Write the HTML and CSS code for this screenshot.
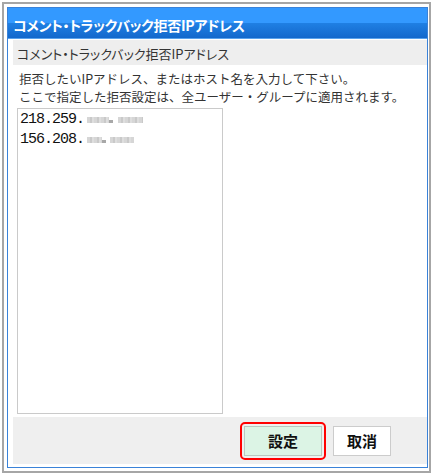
FILE: index.html
```html
<!DOCTYPE html>
<html lang="ja">
<head>
<meta charset="utf-8">
<title>コメント・トラックバック拒否IPアドレス</title>
<link rel="stylesheet" href="styles.css">
</head>
<body>
<div class="frame">
  <div class="dialog">
    <div class="titlebar">コメント・トラックバック拒否IPアドレス</div>
    <div class="body">
      <div class="subhead">コメント・トラックバック拒否IPアドレス</div>
      <div class="content">
        <p class="desc">拒否したいIPアドレス、またはホスト名を入力して下さい。<br>ここで指定した拒否設定は、全ユーザー・グループに適用されます。</p>
        <div class="textbox">
          <div class="line">218.259.<span class="blur a1"></span><span class="dot"></span><span class="blur b1"></span></div>
          <div class="line">156.208.<span class="blur a2"></span><span class="dot"></span><span class="blur b2"></span></div>
        </div>
      </div>
      <div class="buttons">
        <span class="highlight"><button class="btn primary" type="button">設定</button></span>
        <button class="btn" type="button">取消</button>
      </div>
    </div>
  </div>
</div>
</body>
</html>
```

FILE: styles.css
```css
html, body {
  margin: 0;
  padding: 0;
  background: #ffffff;
}

body {
  font-family: "Noto Sans CJK JP", "Noto Sans", sans-serif;
  color: #333333;
}

.frame {
  box-sizing: border-box;
  margin: 2px 0 0 2px;
  width: 429px;
  height: 471px;
  border: 2px solid #a6a6a6;
  padding: 3px 1px 3px 3px;
  background: #ffffff;
}

.dialog {
  box-sizing: border-box;
  height: 461px;
  border: 1px solid #3a82d8;
  display: flex;
  flex-direction: column;
}

.titlebar {
  box-sizing: border-box;
  height: 31px;
  padding: 4px 0 0 5px;
  line-height: 26px;
  font-size: 14px;
  font-weight: bold;
  color: #ffffff;
  letter-spacing: -0.3px;
  font-feature-settings: "palt";
  background: linear-gradient(to bottom, #3399ff 0, #3399ff 50%, #1f7fe3 50%, #1368cc 96%, #5aa2ec 96%, #5aa2ec 100%);
}

.body {
  flex: 1;
  display: flex;
  flex-direction: column;
  padding: 1px 0 3px 5px;
}

.subhead {
  box-sizing: border-box;
  height: 25px;
  padding: 2px 0 0 4px;
  line-height: 23px;
  font-size: 13px;
  color: #333333;
  background: #eeeeee;
  font-feature-settings: "palt";
}

.content {
  flex: 1;
  display: flex;
  flex-direction: column;
  padding: 5px 0 3px 0;
}

.desc {
  margin: 0 0 2px 0;
  padding-left: 6px;
  font-size: 12.5px;
  line-height: 18px;
  color: #333333;
}

.textbox {
  box-sizing: border-box;
  margin-left: 4px;
  width: 206px;
  height: 306px;
  border: 1px solid #cacaca;
  padding: 1px 0 0 2px;
  background: #ffffff;
}

.line {
  height: 20px;
  line-height: 20px;
  font-family: "Liberation Mono", "DejaVu Sans Mono", monospace;
  font-size: 15px;
  letter-spacing: -1px;
  color: #111111;
  white-space: nowrap;
}

.blur {
  display: inline-block;
  height: 6px;
  vertical-align: baseline;
  background: repeating-linear-gradient(to right, #d6d6d6 0, #d6d6d6 3px, #c9c9c9 3px, #c9c9c9 5px, #dedede 5px, #dedede 7px);
}

.a1 { width: 22px; margin-left: 3px; }
.b1 { width: 25px; margin-left: 5px; }
.a2 { width: 15px; margin-left: 3px; }
.b2 { width: 24px; margin-left: 4px; }

.dot {
  display: inline-block;
  width: 4px;
  height: 3px;
  vertical-align: baseline;
  background: #a8a8a8;
}

.buttons {
  box-sizing: border-box;
  height: 47px;
  display: flex;
  justify-content: flex-end;
  align-items: center;
  gap: 7px;
  padding-right: 36px;
  background: #efefef;
}

.highlight {
  display: flex;
  padding: 2px;
  border: 2px solid #ff0000;
  border-radius: 5px;
}

.btn {
  box-sizing: border-box;
  width: 58px;
  height: 30px;
  margin: 0;
  padding: 0;
  border: 1px solid #cccccc;
  border-radius: 0;
  background: #ffffff;
  font-family: "Noto Sans CJK JP", sans-serif;
  font-size: 15px;
  font-weight: bold;
  color: #111111;
  line-height: 28px;
}

.btn.primary {
  width: 78px;
  background: #dcf4e5;
  border-color: #b9c9bf;
}
```
